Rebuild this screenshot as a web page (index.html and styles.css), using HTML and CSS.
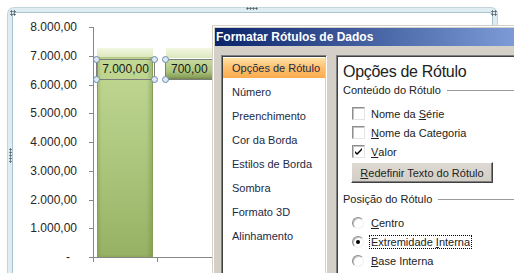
FILE: index.html
```html
<!DOCTYPE html>
<html lang="pt">
  <head>
    <meta charset="UTF-8" />
    <title>Formatar Rótulos de Dados</title>
    <link rel="stylesheet" href="styles.css">
  </head>
  <body>
    <!-- chart area, selected -->
    <div class="chart-frame">
      <span class="grip grip-tl"></span>
      <span class="grip grip-top"></span>
      <span class="grip grip-tr"></span>
      <span class="grip grip-left"></span>
      <div class="chart-inner">
        <div class="chart">
          <div class="y-labels">
            <div class="y-label">8.000,00</div>
            <div class="y-label">7.000,00</div>
            <div class="y-label">6.000,00</div>
            <div class="y-label">5.000,00</div>
            <div class="y-label">4.000,00</div>
            <div class="y-label">3.000,00</div>
            <div class="y-label">2.000,00</div>
            <div class="y-label">1.000,00</div>
            <div class="y-label zero">-</div>
          </div>
          <div class="ticks"></div>
          <div class="plot-col">
            <div class="plot">
              <div class="bar" style="height: 87.5%"></div>
              <div class="data-label label-1">
                7.000,00
                <span class="handle h-tl"></span>
                <span class="handle h-tr"></span>
                <span class="handle h-bl"></span>
                <span class="handle h-br"></span>
              </div>
              <div class="data-label label-2">
                700,00
                <span class="handle h-tl"></span>
                <span class="handle h-bl"></span>
              </div>
            </div>
            <div class="x-ticks"></div>
          </div>
        </div>
      </div>
    </div>

    <!-- dialog over the chart -->
    <div class="dialog">
      <div class="dialog-title">Formatar Rótulos de Dados</div>
      <div class="dialog-body">
        <ul class="nav">
          <li class="selected">Opções de Rótulo</li>
          <li>Número</li>
          <li>Preenchimento</li>
          <li>Cor da Borda</li>
          <li>Estilos de Borda</li>
          <li>Sombra</li>
          <li>Formato 3D</li>
          <li>Alinhamento</li>
        </ul>
        <div class="panel">
          <h2>Opções de Rótulo</h2>
          <div class="group-title">Conteúdo do Rótulo</div>
          <div class="options">
            <div class="option"><span class="check"></span>Nome da&nbsp;<u>S</u>érie</div>
            <div class="option"><span class="check"></span><u>N</u>ome da Categoria</div>
            <div class="option">
              <span class="check">
                <svg width="11" height="11" viewBox="0 0 11 11"><path d="M2 5 L4 7 L9 2 L9 4 L4 9 L2 7 Z" fill="#000"/></svg>
              </span><u>V</u>alor
            </div>
          </div>
          <button class="btn"><u>R</u>edefinir Texto do Rótulo</button>
          <div class="group-title group-2">Posição do Rótulo</div>
          <div class="options">
            <div class="option"><span class="radio"></span><span class="rlabel"><u>C</u>entro</span></div>
            <div class="option"><span class="radio on"></span><span class="rlabel focus">Extremidade <u>I</u>nterna</span></div>
            <div class="option"><span class="radio"></span><span class="rlabel"><u>B</u>ase Interna</span></div>
          </div>
        </div>
      </div>
    </div>
  </body>
</html>
```

FILE: styles.css
```css
* {
  box-sizing: border-box;
}
body {
  margin: 0;
  width: 514px;
  height: 273px;
  overflow: hidden;
  position: relative;
  background: #fff;
  font-family: "Liberation Sans", Arial, sans-serif;
}

/* chart */
.chart-frame {
  position: relative;
  margin: 7px 0 0 7px;
  width: 491px;
  height: 266px;
  padding: 4px 4px 0;
  border: 1px solid #c3d5dc;
  border-bottom: none;
  border-radius: 7px 7px 0 0;
  background: #dfecf1;
}
.chart-inner {
  height: 100%;
  border: 1px solid #a9c4ce;
  border-bottom: none;
  border-radius: 4px 4px 0 0;
  background: #fff;
}
.grip {
  position: absolute;
  background-image: radial-gradient(circle, #56676e 0.9px, transparent 1.3px);
  background-size: 3px 3px;
}
.grip-tl {
  left: 2px;
  top: 2px;
  width: 6px;
  height: 6px;
}
.grip-tr {
  left: 483px;
  top: 2px;
  width: 6px;
  height: 6px;
}
.grip-top {
  left: 238px;
  top: -1px;
  width: 12px;
  height: 3px;
}
.grip-left {
  left: 1px;
  top: 140px;
  width: 3px;
  height: 15px;
}
.chart {
  display: flex;
  align-items: flex-start;
}
.y-labels {
  width: 64px;
  margin-right: 12px;
  display: flex;
  flex-direction: column;
  text-align: right;
  font-size: 12px;
  color: #262626;
}
.y-label {
  height: 28.75px;
  line-height: 28.75px;
}
.y-label.zero {
  padding-right: 7px;
}
.ticks {
  width: 4px;
  height: 231px;
  margin-top: 14px;
  background: repeating-linear-gradient(to bottom, #868686 0 1px, transparent 1px 28.75px);
}
.plot-col {
  margin-top: 14px;
}
.plot {
  position: relative;
  width: 120px;
  height: 231px;
  padding-left: 3px;
  border-left: 1px solid #868686;
  border-bottom: 1px solid #868686;
  display: flex;
  align-items: flex-end;
}
.bar {
  position: relative;
  width: 56px;
  border: 1px solid #869f57;
  border-bottom: none;
  background: linear-gradient(#c2d893, #b1cb83 40%, #97b163);
  box-shadow: inset -3px 0 3px rgba(90, 110, 50, 0.25), inset 2px 0 2px rgba(90, 110, 50, 0.15);
}
.bar::before {
  content: "";
  position: absolute;
  left: -1px;
  right: -1px;
  top: -9px;
  height: 9px;
  background: linear-gradient(#f3f7e2, #dce8bd);
}
.x-ticks {
  width: 120px;
  height: 4px;
  background:
    linear-gradient(#868686, #868686) 0 0 / 1px 100% no-repeat,
    linear-gradient(#868686, #868686) 64px 0 / 1px 100% no-repeat;
}
.data-label {
  position: absolute;
  top: 32px;
  height: 21px;
  border: 1px solid #7d7d7d;
  font-size: 12px;
  line-height: 19px;
  color: #1a1a1a;
}
.label-1 {
  left: 2px;
  width: 59px;
  text-align: center;
}
.label-2 {
  left: 71px;
  width: 60px;
  padding-left: 5px;
  background: linear-gradient(#c6da9c, #b1c884 55%, #8aa25a 90%, #6f8646);
}
.label-2::before {
  content: "";
  position: absolute;
  left: 0;
  right: 0;
  top: -12px;
  height: 10px;
  background: linear-gradient(#f3f7e2, #dce8bd);
}
.handle {
  position: absolute;
  width: 7px;
  height: 7px;
  border-radius: 50%;
  border: 1px solid #6d8cab;
  background: #dce8f4;
}
.h-tl { left: -4px; top: -4px; }
.h-tr { right: -4px; top: -4px; }
.h-bl { left: -4px; bottom: -4px; }
.h-br { right: -4px; bottom: -4px; }

/* dialog */
.dialog {
  position: absolute;
  left: 212px;
  top: 25px;
  width: 302px;
  height: 248px;
  padding: 2px 0 0 2px;
  background: #d4d0c8;
  border-left: 1px solid #d4d0c8;
  border-top: 1px solid #d4d0c8;
  box-shadow: inset 1px 1px #fff;
}
.dialog-title {
  height: 18px;
  line-height: 18px;
  padding-left: 1px;
  font-size: 12px;
  font-weight: bold;
  color: #fff;
  background: linear-gradient(to right, #0a246a, #7c9bd6);
}
.dialog-body {
  display: flex;
  align-items: flex-start;
  gap: 9px;
  padding: 9px 0 0 6px;
}
.nav {
  width: 106px;
  height: 218px;
  margin: 0;
  padding: 2px 1px;
  list-style: none;
  background: #fff;
  border: 1px solid;
  border-bottom: none;
  border-color: #808080 #fff #fff #808080;
  box-shadow: inset 1px 1px #404040, inset -1px 0 #d4d0c8;
}
.nav li {
  height: 20px;
  line-height: 20px;
  margin-bottom: 4px;
  padding-left: 9px;
  font-size: 11px;
  color: #1c2a45;
}
.nav li.selected {
  background: linear-gradient(#ffe2a6, #fdc272 45%, #fcab4d);
}
.panel {
  width: 178px;
  height: 218px;
  padding: 6px 0 0 6px;
  background: #fff;
  border: 1px solid;
  border-right: none;
  border-bottom: none;
  border-color: #808080;
  box-shadow: inset 1px 1px #404040;
  color: #222;
}
.panel h2 {
  margin: 0;
  height: 20px;
  line-height: 20px;
  font-size: 16px;
  font-weight: normal;
  letter-spacing: -0.3px;
}
.group-title {
  display: flex;
  align-items: center;
  height: 14px;
  margin-top: 1px;
  font-size: 11px;
}
.group-title::after {
  content: "";
  flex: 1;
  height: 1px;
  margin-left: 6px;
  background: #9a9a9a;
}
.group-2 {
  margin-top: 9px;
}
.options {
  margin: 7px 0 0 9px;
}
.option {
  display: flex;
  align-items: center;
  height: 19px;
  font-size: 11px;
}
.check {
  width: 13px;
  height: 13px;
  margin-right: 6px;
  background: #fff;
  border: 1px solid;
  border-color: #8e8e8e #e4e4e4 #e4e4e4 #8e8e8e;
  box-shadow: inset 1px 1px #c4c4c4;
}
.check svg {
  display: block;
}
.btn {
  display: block;
  margin: 1px 0 0 8px;
  width: 142px;
  height: 21px;
  padding: 0;
  font-family: "Liberation Sans", Arial, sans-serif;
  font-size: 11px;
  color: #222;
  background: linear-gradient(#dedad3, #d2cec6);
  border: 1px solid;
  border-color: #fff #404040 #404040 #fff;
  box-shadow: inset -1px -1px #808080;
}
.radio {
  position: relative;
  width: 12px;
  height: 12px;
  margin-right: 5px;
  border-radius: 50%;
  background: #fff;
  border: 1px solid;
  border-color: #8e8e8e #f0f0f0 #f0f0f0 #8e8e8e;
  box-shadow: inset 1px 1px #c4c4c4;
}
.radio.on::after {
  content: "";
  position: absolute;
  left: 3px;
  top: 3px;
  width: 4px;
  height: 4px;
  border-radius: 50%;
  background: #000;
}
.rlabel {
  padding: 0 1px;
  line-height: 12px;
  border: 1px dotted transparent;
}
.rlabel.focus {
  border-color: #000;
}
```
